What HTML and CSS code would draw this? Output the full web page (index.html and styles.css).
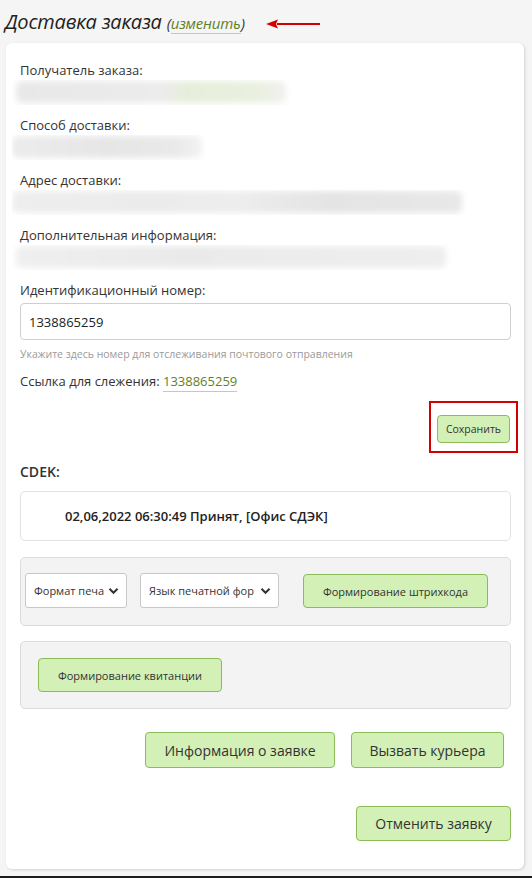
FILE: index.html
```html
<!DOCTYPE html>
<html lang="ru">
<head>
<meta charset="utf-8">
<link rel="stylesheet" href="styles.css">
</head>
<body>
<div class="page">
  <div class="title-row">
    <h1 class="title">Доставка заказа <span class="paren">(<a class="edit-link">изменить</a>)</span></h1>
    <svg class="arrow" width="56" height="10" viewBox="0 0 56 10"><path d="M12 5 H55" stroke="#d40000" stroke-width="2"/><path d="M1 5 L13 0.5 L11 5 L13 9.5 Z" fill="#d40000"/></svg>
  </div>
  <div class="card">
    <div class="field">
      <div class="label">Получатель заказа:</div>
      <div class="blur-wrap"><div class="blur b1"></div></div>
    </div>
    <div class="field">
      <div class="label">Способ доставки:</div>
      <div class="blur-wrap"><div class="blur b2"></div></div>
    </div>
    <div class="field">
      <div class="label">Адрес доставки:</div>
      <div class="blur-wrap"><div class="blur b3"></div></div>
    </div>
    <div class="field">
      <div class="label">Дополнительная информация:</div>
      <div class="blur-wrap"><div class="blur b4"></div></div>
    </div>
    <div class="label">Идентификационный номер:</div>
    <div class="input">1338865259</div>
    <div class="hint">Укажите здесь номер для отслеживания почтового отправления</div>
    <div class="track">Ссылка для слежения: <a class="track-link">1338865259</a></div>
    <div class="save-row">
      <div class="highlight"><button class="btn btn-small">Сохранить</button></div>
    </div>
    <div class="cdek-title">CDEK:</div>
    <div class="status-box">02,06,2022 06:30:49 Принят, [Офис СДЭК]</div>
    <div class="panel panel-print">
      <div class="select s1"><span class="sel-text">Формат печа</span><svg width="11" height="8" viewBox="0 0 11 8"><path d="M1.5 1.8 L5.5 5.8 L9.5 1.8" fill="none" stroke="#333" stroke-width="2"/></svg></div>
      <div class="select s2"><span class="sel-text">Язык печатной фор</span><svg width="11" height="8" viewBox="0 0 11 8"><path d="M1.5 1.8 L5.5 5.8 L9.5 1.8" fill="none" stroke="#333" stroke-width="2"/></svg></div>
      <button class="btn btn-mid barcode">Формирование штрихкода</button>
    </div>
    <div class="panel panel-receipt">
      <button class="btn btn-mid receipt">Формирование квитанции</button>
    </div>
    <div class="actions">
      <button class="btn btn-big info">Информация о заявке</button>
      <button class="btn btn-big courier">Вызвать курьера</button>
    </div>
    <div class="cancel-row">
      <button class="btn btn-big cancel">Отменить заявку</button>
    </div>
  </div>
  <div class="bottom-bar"></div>
</div>
</body>
</html>
```
FILE: styles.css
```css
html, body {
  margin: 0;
  padding: 0;
  background: #f5f5f5;
  overflow: hidden;
}
body {
  font-family: "Open Sans", "Noto Sans", sans-serif;
  color: #333;
  width: 532px;
  height: 878px;
}
.page {
  display: flex;
  flex-direction: column;
  height: 878px;
}
.title-row {
  display: flex;
  align-items: center;
  height: 43px;
  padding-left: 5px;
  box-sizing: border-box;
}
.title {
  margin: 0;
  font-family: "Open Sans", sans-serif;
  font-style: italic;
  font-weight: 400;
  font-size: 20px;
  letter-spacing: -0.2px;
  color: #222;
  line-height: 24px;
  margin-top: 1px;
}
.paren {
  font-size: 15px;
  color: #333;
}
.edit-link {
  color: #5f7f25;
  border-bottom: 1px solid #b5dc82;
}
.arrow {
  margin-left: 20px;
  margin-top: 4px;
}
.card {
  margin-left: 6px;
  width: 518px;
  box-sizing: border-box;
  background: #fff;
  border-radius: 6px;
  box-shadow: 1px 1px 3px rgba(0,0,0,0.15);
  padding: 17px 13px 28px 14px;
  display: flex;
  flex-direction: column;
}
.label {
  font-size: 13px;
  line-height: 20px;
  color: #333;
}
.field {
  margin-bottom: 10px;
}
.blur-wrap {
  height: 25px;
  position: relative;
  overflow: hidden;
  margin-left: -8px;
}
.blur {
  height: 22px;
  margin-top: 1px;
  border-radius: 6px;
  filter: blur(3px);
}
.b1 {
  width: 270px;
  margin-left: 4px;
  background: linear-gradient(90deg, #e8e8e8 0%, #ececec 55%, #e6eedb 62%, #eaf0e0 90%, #f0f0f0 100%);
}
.b2 {
  width: 190px;
  background: linear-gradient(90deg, #ececec 0%, #e6e6e6 50%, #e9e9e9 85%, #f2f2f2 100%);
}
.b3 {
  width: 450px;
  background: linear-gradient(90deg, #eeeeee 0%, #ebebeb 30%, #ededed 50%, #e4e4e4 70%, #e8e8e8 100%);
}
.b4 {
  width: 430px;
  margin-left: 4px;
  background: linear-gradient(90deg, #efefef 0%, #eaeaea 40%, #ececec 60%, #eeeeee 100%);
}
.input {
  margin-top: 3px;
  height: 37px;
  box-sizing: border-box;
  border: 1px solid #cfcfcf;
  border-radius: 4px;
  padding: 0 8px;
  display: flex;
  align-items: center;
  font-size: 13px;
  color: #222;
}
.hint {
  margin-top: 7px;
  font-size: 10.5px;
  line-height: 14px;
  color: #9a9a9a;
}
.track {
  margin-top: 10px;
  font-size: 13px;
  line-height: 20px;
}
.track-link {
  color: #5f7f25;
  border-bottom: 1px solid #b5dc82;
  padding-bottom: 1px;
}
.save-row {
  display: flex;
  justify-content: flex-end;
  margin-top: 10px;
  margin-right: -7px;
}
.highlight {
  border: 2px solid #d40000;
  padding: 12px 6px 8px 6px;
  display: flex;
}
.btn {
  font-family: "Open Sans", "Noto Sans", sans-serif;
  background: #d3f0b6;
  border: 1px solid #8dbb58;
  border-radius: 4px;
  color: #333;
  padding: 0;
  cursor: pointer;
}
.btn-small {
  width: 73px;
  height: 28px;
  font-size: 10.5px;
}
.cdek-title {
  margin-top: 9px;
  font-size: 14px;
  line-height: 20px;
  font-weight: 600;
  color: #333;
}
.status-box {
  margin-top: 9px;
  height: 50px;
  box-sizing: border-box;
  border: 1px solid #e2e2e2;
  border-radius: 5px;
  display: flex;
  align-items: center;
  padding-left: 44px;
  font-size: 13px;
  font-weight: 600;
  color: #222;
}
.panel {
  background: #f3f3f3;
  border: 1px solid #dcdcdc;
  border-radius: 5px;
  box-sizing: border-box;
  display: flex;
  align-items: flex-start;
}
.panel-print {
  margin-top: 16px;
  height: 69px;
  padding: 15px 0 0 4px;
}
.panel-receipt {
  margin-top: 15px;
  height: 68px;
  padding: 16px 0 0 17px;
}
.select {
  height: 35px;
  box-sizing: border-box;
  background: #fff;
  border: 1px solid #c8c8c8;
  border-radius: 3px;
  display: flex;
  align-items: center;
  justify-content: space-between;
  font-size: 11px;
  color: #333;
  padding: 0 7px 0 8px;
  overflow: hidden;
  white-space: nowrap;
}
.sel-text {
  overflow: hidden;
}
.s1 { width: 102px; }
.s2 { width: 139px; margin-left: 13px; }
.btn-mid {
  height: 34px;
  font-size: 11px;
}
.barcode {
  width: 185px;
  margin-left: 24px;
  margin-top: 1px;
}
.receipt {
  width: 184px;
}
.actions {
  margin-top: 23px;
  display: flex;
  justify-content: flex-end;
  gap: 16px;
  padding-right: 7px;
}
.btn-big {
  height: 36px;
  font-size: 14px;
}
.info { width: 190px; }
.courier { width: 153px; }
.cancel-row {
  margin-top: 38px;
  display: flex;
  justify-content: flex-end;
}
.cancel {
  width: 155px;
  height: 35px;
}
.bottom-bar {
  margin-top: auto;
  height: 2px;
  background: #1c1c1c;
}
```
